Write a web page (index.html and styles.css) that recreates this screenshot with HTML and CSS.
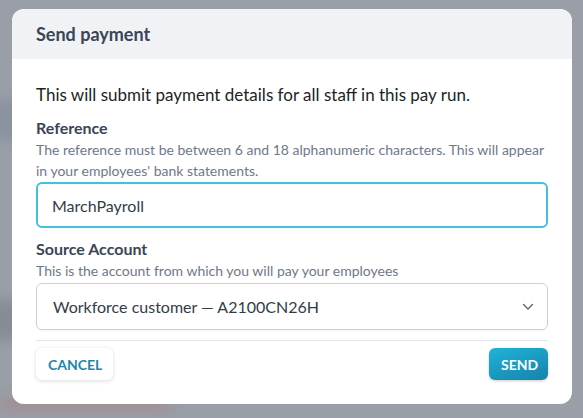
FILE: index.html
```html
<!DOCTYPE html>
<html lang="en">
<head>
  <meta charset="UTF-8">
  <meta name="viewport" content="width=device-width, initial-scale=1.0">
  <title>Send payment</title>
  <link rel="stylesheet" href="styles.css">
</head>
<body>
  <!-- blurred page behind the modal -->
  <div class="backdrop">
    <div class="blur blur-left"></div>
    <div class="blur blur-left2"></div>
    <div class="blur blur-red"></div>
  </div>

  <div class="modal">
    <header class="modal-header">
      <h2>Send payment</h2>
    </header>

    <div class="modal-body">
      <p class="intro">This will submit payment details for all staff in this pay run.</p>

      <div class="field">
        <label class="field-label" for="reference">Reference</label>
        <p class="field-help">The reference must be between 6 and 18 alphanumeric characters. This will appear in your employees' bank statements.</p>
        <input id="reference" class="text-input" type="text" value="MarchPayroll">
      </div>

      <div class="field">
        <label class="field-label" for="account">Source Account</label>
        <p class="field-help">This is the account from which you will pay your employees</p>
        <div class="select" id="account">
          <span>Workforce customer — A2100CN26H</span>
          <svg class="chevron" width="12" height="8" viewBox="0 0 12 8">
            <path d="M1.5 1.5 L6 6 L10.5 1.5" fill="none" stroke="#5b6676" stroke-width="1.4" stroke-linecap="round" stroke-linejoin="round"/>
          </svg>
        </div>
      </div>

      <div class="modal-footer">
        <button class="btn btn-cancel">CANCEL</button>
        <button class="btn btn-send">SEND</button>
      </div>
    </div>
  </div>
</body>
</html>
```

FILE: styles.css
```css
* {
  margin: 0;
  padding: 0;
  box-sizing: border-box;
}

body {
  font-family: Lato, "Open Sans", sans-serif;
  background-color: #999ea7;
  width: 583px;
  height: 418px;
  overflow: hidden;
  position: relative;
}

.backdrop {
  position: absolute;
  inset: 0;
  overflow: hidden;
}

.blur {
  position: absolute;
  filter: blur(6px);
}

.blur-left {
  left: -10px;
  top: 100px;
  width: 30px;
  height: 40px;
  background-color: #8a929d;
}

.blur-left2 {
  left: -10px;
  top: 300px;
  width: 30px;
  height: 40px;
  background-color: #868c96;
}

.blur-red {
  left: 0;
  top: 400px;
  width: 170px;
  height: 8px;
  background-color: #a8868c;
}

.modal {
  position: relative;
  margin: 9px 0 0 12px;
  width: 560px;
  background-color: white;
  border-radius: 12px;
  overflow: hidden;
}

.modal-header {
  height: 50px;
  background-color: #f0f2f5;
  padding: 0 24px;
  display: flex;
  align-items: center;
}

.modal-header h2 {
  font-size: 18px;
  font-weight: 700;
  color: #3a4556;
}

.modal-body {
  padding: 24px 24px 24px;
}

.intro {
  font-size: 17px;
  line-height: 24px;
  color: #1c1f24;
}

.field {
  margin-top: 10px;
}

.field-label {
  display: block;
  font-size: 16px;
  font-weight: 700;
  line-height: 22px;
  color: #3a4556;
}

.field-help {
  font-size: 14px;
  line-height: 21px;
  color: #6e7889;
}

.text-input {
  display: block;
  width: 100%;
  height: 46px;
  margin-top: 1px;
  padding: 0 14px;
  font-family: inherit;
  font-size: 16px;
  color: #333c48;
  border: 2px solid #45bfe0;
  border-radius: 6px;
  outline: none;
}

.select {
  margin-top: 2px;
  height: 47px;
  padding: 0 16px;
  display: flex;
  align-items: center;
  justify-content: space-between;
  font-size: 16px;
  color: #333c48;
  border: 1px solid #c9d0dc;
  border-radius: 6px;
  box-shadow: 0 1px 2px rgba(0, 0, 0, 0.05);
}

.chevron {
  margin-right: -3px;
}

.modal-footer {
  margin-top: 10px;
  padding-top: 7px;
  border-top: 1px solid #e3e6eb;
  display: flex;
  justify-content: space-between;
}

.btn {
  height: 32px;
  padding: 0 12px;
  font-family: inherit;
  font-size: 14px;
  font-weight: 700;
  border: none;
  border-radius: 6px;
  cursor: pointer;
}

.btn-cancel {
  width: 77px;
  background-color: white;
  color: #1e86aa;
  box-shadow: 0 1px 4px rgba(0, 0, 0, 0.15);
}

.btn-send {
  width: 59px;
  color: white;
  background: linear-gradient(160deg, #1fb3da, #1683a9);
  box-shadow: 0 1px 3px rgba(0, 0, 0, 0.2);
}
```
